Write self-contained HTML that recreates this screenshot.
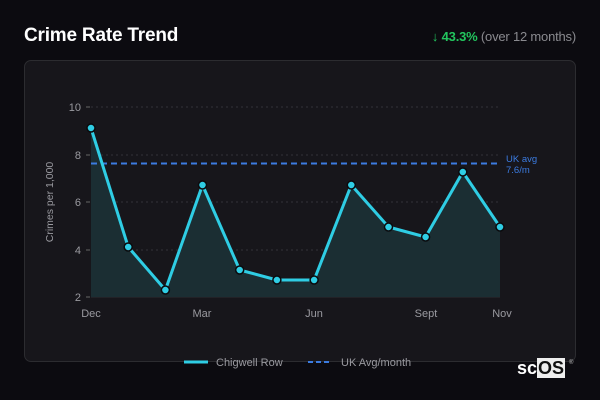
<!DOCTYPE html>
<html><head><meta charset="utf-8"><style>
*{margin:0;padding:0;box-sizing:border-box}
body{width:600px;height:400px;background:#0c0b10;font-family:"Liberation Sans","DejaVu Sans",sans-serif;position:relative;overflow:hidden}
.t{position:absolute;left:24px;top:25px;color:#fff;font:bold 19px "Liberation Sans",sans-serif;letter-spacing:-0.2px}
.s{position:absolute;right:24px;top:29px;font:13px "Liberation Sans",sans-serif;color:#8a8a8f;letter-spacing:-0.2px}
.s b{color:#22c55e;font-weight:bold}
.card{position:absolute;left:24px;top:60px;width:552px;height:302px;background:#17161b;border:1px solid #2c2c30;border-radius:7px}
svg{position:absolute;left:0;top:0}
.logo{position:absolute;left:517px;top:358px;color:#fff;font:bold 18px "Liberation Sans",sans-serif}
.logo span{background:#eee;color:#111;padding:0 1px}
</style></head><body>
<div class="t">Crime Rate Trend</div>
<div class="s"><b style="font-weight:normal">↓</b> <b>43.3%</b> (over 12 months)</div>
<div class="card"></div>
<svg width="600" height="400" font-family="Liberation Sans, sans-serif">
<g stroke="#333338" stroke-dasharray="2 3" stroke-width="1">
<line x1="91" y1="107" x2="500" y2="107"/><line x1="91" y1="155" x2="500" y2="155"/><line x1="91" y1="202" x2="500" y2="202"/><line x1="91" y1="250" x2="500" y2="250"/>
</g>
<line x1="91" y1="297" x2="500" y2="297" stroke="#2e2e33"/>
<g stroke="#666" stroke-width="1"><line x1="86" y1="107" x2="90" y2="107"/><line x1="86" y1="155" x2="90" y2="155"/><line x1="86" y1="202" x2="90" y2="202"/><line x1="86" y1="250" x2="90" y2="250"/><line x1="86" y1="297" x2="90" y2="297"/></g>
<g fill="#9a9aa0" font-size="11" text-anchor="end"><text x="81" y="111">10</text><text x="81" y="159">8</text><text x="81" y="206">6</text><text x="81" y="254">4</text><text x="81" y="301">2</text></g>
<text transform="translate(53,202) rotate(-90)" fill="#9a9aa0" font-size="10.5" text-anchor="middle">Crimes per 1,000</text>
<g fill="#9a9aa0" font-size="11" text-anchor="middle"><text x="91" y="317">Dec</text><text x="202" y="317">Mar</text><text x="314" y="317">Jun</text><text x="426" y="317">Sept</text><text x="502" y="317">Nov</text></g>
<path d="M91,128 L128.2,247 L165.4,290 L202.5,185 L239.7,270 L276.9,280 L314.1,280 L351.3,185 L388.5,227 L425.6,237 L462.8,172 L500,227 L500,297 L91,297Z" fill="#1b2e33"/>
<line x1="91" y1="163.5" x2="497" y2="163.5" stroke="#3b7be0" stroke-width="2" stroke-dasharray="6 4"/>
<text x="506" y="162" fill="#3b7be0" font-size="9.5">UK avg</text><text x="506" y="173" fill="#3b7be0" font-size="9.5">7.6/m</text>
<polyline points="91,128 128.2,247 165.4,290 202.5,185 239.7,270 276.9,280 314.1,280 351.3,185 388.5,227 425.6,237 462.8,172 500,227" fill="none" stroke="#2fcde4" stroke-width="3" stroke-linejoin="round"/>
<g fill="#2fcde4" stroke="#0b0b0e" stroke-width="1.5">
<circle cx="91" cy="128" r="4"/><circle cx="128.2" cy="247" r="4"/><circle cx="165.4" cy="290" r="4"/><circle cx="202.5" cy="185" r="4"/><circle cx="239.7" cy="270" r="4"/><circle cx="276.9" cy="280" r="4"/><circle cx="314.1" cy="280" r="4"/><circle cx="351.3" cy="185" r="4"/><circle cx="388.5" cy="227" r="4"/><circle cx="425.6" cy="237" r="4"/><circle cx="462.8" cy="172" r="4"/><circle cx="500" cy="227" r="4"/>
</g>
<line x1="184" y1="362" x2="208" y2="362" stroke="#2fcde4" stroke-width="3"/>
<text x="216" y="366" fill="#9a9aa0" font-size="11">Chigwell Row</text>
<line x1="308" y1="362" x2="332" y2="362" stroke="#3b7be0" stroke-width="2" stroke-dasharray="5 3"/>
<text x="341" y="366" fill="#9a9aa0" font-size="11">UK Avg/month</text>
<text x="569" y="364" fill="#bbb" font-size="6">®</text>
</svg>
<div class="logo">sc<span>OS</span></div>
</body></html>
